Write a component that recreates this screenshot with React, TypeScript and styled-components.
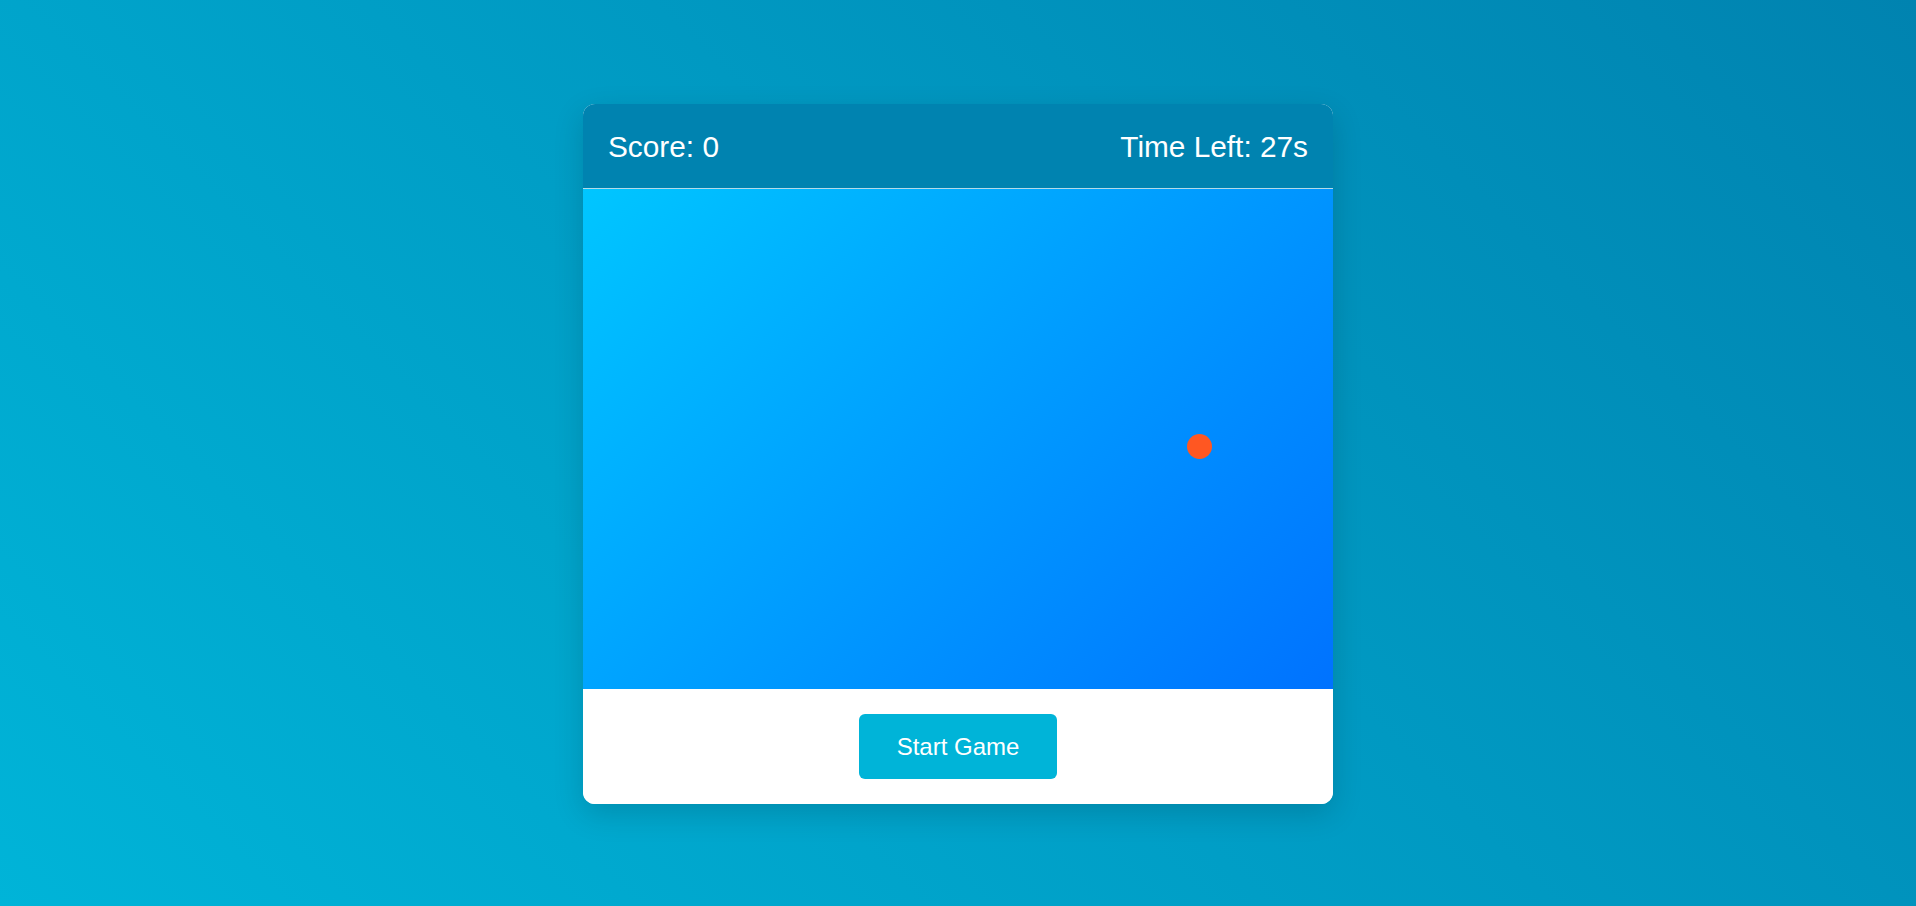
import React from "react";
import styled, { createGlobalStyle } from "styled-components";

const GlobalStyle = createGlobalStyle`
  html, body { margin: 0; padding: 0; }
  body { font-family: "Liberation Sans", Arial, sans-serif; }
  * { box-sizing: border-box; }
`;

const Page = styled.div`
  min-height: 100vh;
  padding-top: 2px;
  display: flex;
  align-items: center;
  justify-content: center;
  background: linear-gradient(45deg, #00b4d8, #0083b0);
`;

const Card = styled.div`
  width: 750px;
  border-radius: 12px;
  overflow: hidden;
  background: #ffffff;
  box-shadow: 0 10px 30px rgba(0, 0, 0, 0.15);
  display: flex;
  flex-direction: column;
`;

const Header = styled.div`
  height: 85px;
  padding: 2px 25px 0;
  display: flex;
  align-items: center;
  justify-content: space-between;
  background: #0083b0;
  border-bottom: 1px solid rgba(255, 255, 255, 0.7);
  color: #ffffff;
  font-size: 29.8px;
`;

const Stat = styled.span`
  line-height: 1;
`;

const GameArea = styled.div`
  position: relative;
  height: 500px;
  background: linear-gradient(135deg, #00c6ff, #0072ff);
`;

const Target = styled.div<{ $x: number; $y: number }>`
  position: absolute;
  left: ${(p) => p.$x}px;
  top: ${(p) => p.$y}px;
  width: 25px;
  height: 25px;
  border-radius: 50%;
  background: #ff5722;
`;

const Footer = styled.div`
  height: 115px;
  display: flex;
  align-items: center;
  justify-content: center;
  background: #ffffff;
`;

const StartButton = styled.button`
  width: 198px;
  height: 65px;
  border: none;
  border-radius: 6px;
  background: #00b4d8;
  color: #ffffff;
  font-family: "Liberation Sans", Arial, sans-serif;
  font-size: 24px;
  cursor: pointer;
`;

export default function App() {
  return (
    <>
      <GlobalStyle />
      <Page>
        <Card>
          <Header>
            <Stat>Score: 0</Stat>
            <Stat>Time Left: 27s</Stat>
          </Header>
          <GameArea>
            <Target $x={604} $y={245} />
          </GameArea>
          <Footer>
            <StartButton>Start Game</StartButton>
          </Footer>
        </Card>
      </Page>
    </>
  );
}
